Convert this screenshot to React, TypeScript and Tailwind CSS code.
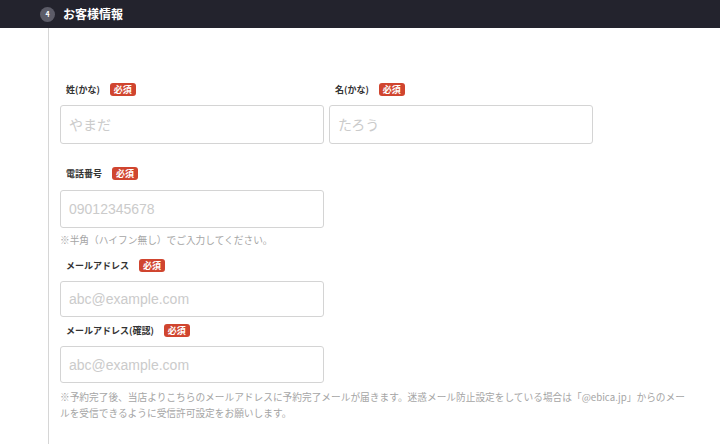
import React from "react"

const font = { fontFamily: '"Noto Sans CJK JP", "Noto Sans", sans-serif' }

function Required() {
  return (
    <span className="inline-flex h-[13px] items-center rounded-[3px] bg-[#d0452f] px-[4px] text-[9px] font-bold leading-none text-white">
      必須
    </span>
  )
}

function Label({ text }: { text: string }) {
  return (
    <div className="flex h-[13px] items-center gap-[10px] pl-[6px]">
      <span className="text-[9px] font-bold leading-none text-[#333]">{text}</span>
      <Required />
    </div>
  )
}

function Field({ placeholder, h = "h-[38px]" }: { placeholder: string; h?: string }) {
  return (
    <input
      placeholder={placeholder}
      className={`w-[264px] ${h} rounded-[3px] border border-[#d4d4d4] bg-white px-[8px] text-[14px] text-[#333] outline-none placeholder:text-[#cbcbcb]`}
      style={{ fontFamily: '"Liberation Sans", "Noto Sans CJK JP", sans-serif' }}
    />
  )
}

export default function App() {
  return (
    <div className="h-[444px] w-[720px] overflow-hidden bg-white" style={font}>
      {/* Section header */}
      <div className="flex h-[28px] items-center gap-[8px] bg-[#23232d] pl-[40px]">
        <span className="flex h-[15px] w-[15px] items-center justify-center rounded-full bg-[#5c5c68] text-[7px] font-bold leading-none text-white">
          4
        </span>
        <span className="text-[12px] font-bold leading-none text-white">お客様情報</span>
      </div>

      <div className="flex h-[416px]">
        <div className="w-[49px] shrink-0 border-r border-[#d6d6d6]" />

        <div className="pl-[11px] pt-[55px]">
          {/* Name */}
          <div className="flex gap-[5px]">
            <div className="flex flex-col gap-[9px]">
              <Label text="姓(かな)" />
              <Field placeholder="やまだ" h="h-[39px]" />
            </div>
            <div className="flex flex-col gap-[9px]">
              <Label text="名(かな)" />
              <Field placeholder="たろう" h="h-[39px]" />
            </div>
          </div>

          {/* Phone */}
          <div className="mt-[23px] flex flex-col gap-[10px]">
            <Label text="電話番号" />
            <Field placeholder="09012345678" />
          </div>
          <p className="mt-[4px] text-[9.7px] leading-[16px] text-[#a5a5a5]">
            ※半角（ハイフン無し）でご入力してください。
          </p>

          {/* Email */}
          <div className="mt-[11px] flex flex-col gap-[9px]">
            <Label text="メールアドレス" />
            <Field placeholder="abc@example.com" h="h-[36px]" />
          </div>

          <div className="mt-[7px] flex flex-col gap-[9px]">
            <Label text="メールアドレス(確認)" />
            <Field placeholder="abc@example.com" h="h-[37px]" />
          </div>
          <p className="mt-[6px] w-[628px] text-[9.7px] leading-[16px] text-[#a5a5a5]">
            ※予約完了後、当店よりこちらのメールアドレスに予約完了メールが届きます。迷惑メール防止設定をしている場合は「@ebica.jp」からのメールを受信できるように受信許可設定をお願いします。
          </p>
        </div>
      </div>
    </div>
  )
}
